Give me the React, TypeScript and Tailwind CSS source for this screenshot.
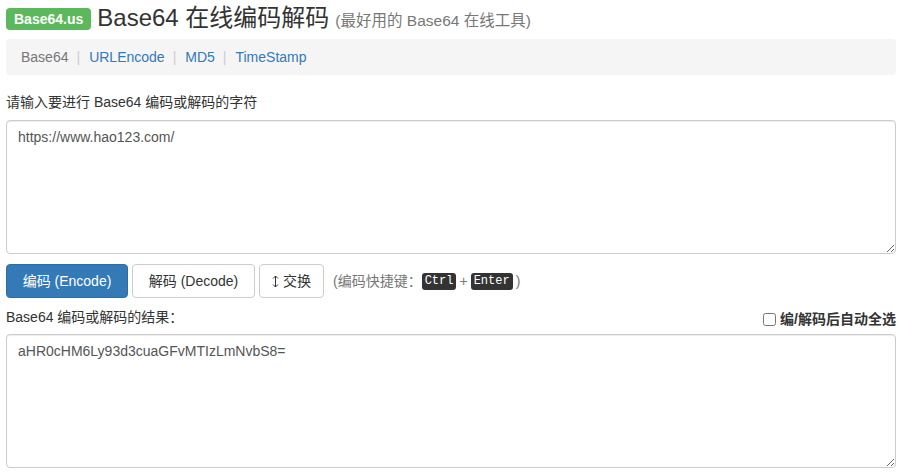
import React from "react";

const FONT = '"Liberation Sans", Arial, "Noto Sans CJK SC", sans-serif';

function Sep() {
  return <span className="text-[#ccc] pl-[8px] pr-[9px]">|</span>;
}

export default function App() {
  return (
    <div className="w-[900px] h-[472px] bg-white text-[#333] text-[14px] leading-[20px] overflow-hidden pl-[6px] pr-[4px]" style={{ fontFamily: FONT }}>
      <div className="flex items-center h-[36px]">
        <span className="bg-[#5cb85c] text-white font-bold text-[14px] leading-[22px] h-[22px] px-[8px] rounded-[4px] mr-[6px] mt-[1px]">Base64.us</span>
        <span className="flex items-baseline">
          <span className="text-[24px] leading-[30px] text-[#333]">Base64 在线编码解码</span>
          <span className="text-[15.5px] text-[#777] ml-[6px]">(最好用的 Base64 在线工具)</span>
        </span>
      </div>
      <div className="mt-[3px] h-[36px] bg-[#f5f5f5] rounded-[4px] flex items-center pl-[15px]">
        <span className="text-[#777]">Base64</span>
        <Sep />
        <span className="text-[#337ab7]">URLEncode</span>
        <Sep />
        <span className="text-[#337ab7]">MD5</span>
        <Sep />
        <span className="text-[#337ab7]">TimeStamp</span>
      </div>
      <div className="mt-[17px] h-[20px]">请输入要进行 Base64 编码或解码的字符</div>
      <textarea
        className="block mt-[8px] w-full h-[134px] border border-[#ccc] rounded-[4px] px-[11px] py-[6px] text-[14px] leading-[20px] text-[#555] outline-none shadow-[inset_0_1px_1px_rgba(0,0,0,0.075)]"
        style={{ fontFamily: FONT }}
        defaultValue="https://www.hao123.com/"
      />
      <div className="mt-[10px] flex items-center h-[34px]">
        <button className="w-[122px] h-[34px] bg-[#337ab7] text-white rounded-[4px] border border-[#2e6da4] text-[14px]" style={{ fontFamily: FONT }}>编码 (Encode)</button>
        <button className="ml-[4px] w-[123px] h-[34px] bg-white text-[#333] rounded-[4px] border border-[#ccc] text-[14px]" style={{ fontFamily: FONT }}>解码 (Decode)</button>
        <button className="ml-[4px] w-[65px] h-[34px] bg-white text-[#333] rounded-[4px] border border-[#ccc] text-[14px] flex items-center justify-center" style={{ fontFamily: FONT }}>
          <svg width="7" height="13" viewBox="0 0 7 13" className="mr-[4px]">
            <path d="M3.5 1 L3.5 12 M1 3.5 L3.5 1 L6 3.5 M1 9.5 L3.5 12 L6 9.5" stroke="#333" strokeWidth="1" fill="none" />
          </svg>
          交换
        </button>
        <span className="ml-[9px] text-[#777] flex items-center">
          (编码快捷键：
          <kbd className="bg-[#333] text-white text-[12px] leading-[17px] px-[3px] rounded-[3px]" style={{ fontFamily: '"Liberation Mono", monospace' }}>Ctrl</kbd>
          <span className="px-[3px]">+</span>
          <kbd className="bg-[#333] text-white text-[12px] leading-[17px] px-[3px] rounded-[3px]" style={{ fontFamily: '"Liberation Mono", monospace' }}>Enter</kbd>
          <span className="ml-[3px]">)</span>
        </span>
      </div>
      <div className="mt-[9px] h-[20px] flex items-center justify-between">
        <span>Base64 编码或解码的结果：</span>
        <label className="flex items-center font-bold mt-[4px]">
          <input type="checkbox" className="w-[13px] h-[13px] m-0 mr-[4px]" />
          编/解码后自动全选
        </label>
      </div>
      <textarea
        className="block mt-[7px] w-full h-[134px] border border-[#ccc] rounded-[4px] px-[11px] py-[6px] text-[14px] leading-[20px] text-[#555] outline-none shadow-[inset_0_1px_1px_rgba(0,0,0,0.075)]"
        style={{ fontFamily: FONT }}
        defaultValue="aHR0cHM6Ly93d3cuaGFvMTIzLmNvbS8="
      />
    </div>
  );
}
